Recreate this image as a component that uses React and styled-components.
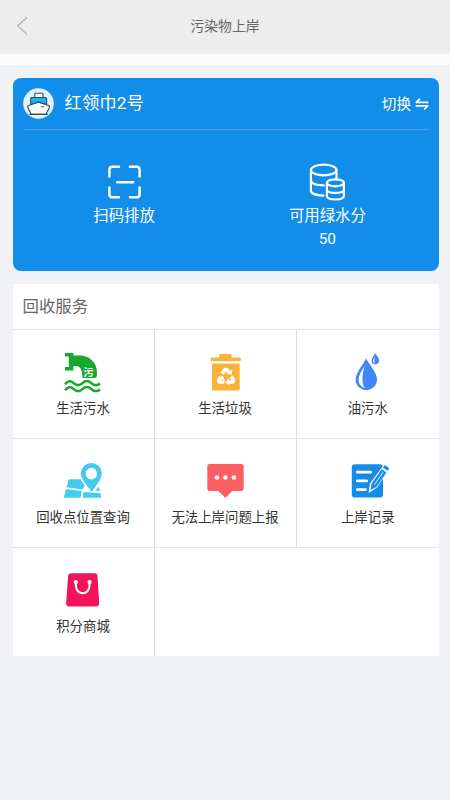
import React from "react";
import styled, { createGlobalStyle } from "styled-components";

const GlobalStyle = createGlobalStyle`
  * { box-sizing: border-box; }
  body {
    margin: 0;
    background: #f0f2f5;
    font-family: Roboto, "Noto Sans CJK SC", sans-serif;
  }
`;

const Page = styled.div`
  width: 100%;
  min-height: 800px;
  background: #f0f2f5;
`;

const Header = styled.header`
  display: grid;
  grid-template-columns: 44px 1fr 44px;
  align-items: center;
  height: 54px;
  background: #ededed;
`;

const BackButton = styled.button`
  display: flex;
  padding: 0 0 2px 16px;
  border: 0;
  background: none;
  svg { display: block; }
`;

const Title = styled.h1`
  margin: 0;
  padding-bottom: 2px;
  text-align: center;
  font-size: 13.8px;
  font-weight: 400;
  line-height: 20px;
  color: #666;
`;

const Strip = styled.div`
  height: 11px;
  background: #fcfcfc;
`;

const Main = styled.main`
  display: flex;
  flex-direction: column;
  gap: 12.5px;
  padding: 13px 11px 0 12.5px;
`;

const ShipCard = styled.section`
  height: 193px;
  padding: 0 10px;
  border-radius: 8px;
  background: #128dea;
  color: #fff;
`;

const ShipBar = styled.div`
  display: flex;
  align-items: center;
  height: 52px;
  border-bottom: 1px solid #419fec;
`;

const ShipName = styled.span`
  flex: 1;
  padding: 0 0 2px 11px;
  font-size: 17.4px;
  line-height: 24px;
`;

const SwitchButton = styled.button`
  display: flex;
  align-items: center;
  gap: 4px;
  padding: 0;
  border: 0;
  background: none;
  color: #fff;
  font: inherit;
  font-size: 14.6px;
  line-height: 22px;
`;

const Actions = styled.div`
  display: grid;
  grid-template-columns: 1fr 1fr;
  padding-top: 30px;
`;

const Action = styled.div`
  display: flex;
  flex-direction: column;
  align-items: center;
  font-size: 15.4px;
  line-height: 24px;
  svg { display: block; }
`;

const Points = styled.span`
  margin-top: -1px;
`;

const Services = styled.section`
  height: 372.5px;
  background: #fff;
`;

const ServicesTitle = styled.h2`
  height: 46px;
  margin: 0;
  padding-left: 10px;
  border-bottom: 1px solid #e4e6e8;
  font-size: 16.4px;
  font-weight: 400;
  line-height: 46px;
  color: #666;
`;

const Grid = styled.div`
  display: grid;
  grid-template-columns: 142px 142px 1fr;
  grid-auto-rows: 109px;
`;

const Cell = styled.div`
  display: flex;
  flex-direction: column;
  align-items: center;
  padding-top: 20px;
  border-right: ${(p) => (p.$right ? "1px solid #dcdee0" : "0")};
  border-bottom: ${(p) => (p.$bottom ? "1px solid #e4e6e8" : "0")};
  svg { display: block; flex: none; }
`;

const Label = styled.span`
  margin-top: 5px;
  font-size: 13.4px;
  line-height: 20px;
  color: #333;
  white-space: nowrap;
`;

const Glyph = styled.text`
  font-family: "Noto Sans CJK SC", sans-serif;
  font-size: 10px;
  font-weight: 700;
  fill: #fff;
`;

const BackIcon = () => (
  <svg width="13" height="20" viewBox="0 0 13 20" fill="none" stroke="#aaa" strokeWidth="1.1">
    <path d="M11 1.5 1.7 9.8 11 18.3" />
  </svg>
);

const ShipIcon = () => (
  <svg width="31" height="31" viewBox="0 0 31 31">
    <circle cx="15.5" cy="15.5" r="15.3" fill="#e0f2fb" />
    <g stroke="#34466a" strokeWidth="1.1" strokeLinejoin="round" strokeLinecap="round">
      <path d="M11.8 9.4V6q0-.7.7-.7h6.8q.7 0 .7.7v3.4" fill="#fff" />
      <path d="M7.6 16.8v-6.3q0-1 1-1h14q1 0 1 1v6.3L15.6 14z" fill="#16b4ed" />
      <path d="M8 26.2C7.4 23 4.9 21.8 4.7 18.6q0-.8.8-1L15.5 14.2l10.2 3.4q.8.2.8 1c-.2 3.2-2.7 4.4-3.3 7.6z" fill="#fff" />
      <path d="M18.6 18.8h2" />
      <path d="M6.8 26.4h17.6" fill="none" />
    </g>
  </svg>
);

const SwapIcon = () => (
  <svg width="14" height="12" viewBox="0 0 14 12" fill="none" stroke="#fff" strokeWidth="1.7" strokeLinecap="round" strokeLinejoin="round">
    <path d="M4.4 1.2 1.3 4.4h11.4M1.3 7.8h11.4L9.6 11" />
  </svg>
);

const ScanIcon = () => (
  <svg width="44" height="44" viewBox="102 160 44 44" fill="none" stroke="#fff" strokeWidth="2.5" strokeLinecap="round">
    <path d="M109.4 176.5v-6.8q0-2.9 2.9-2.9h6.7M130 166.8h6.7q2.9 0 2.9 2.9v6.8M109.4 187.6v6.8q0 2.9 2.9 2.9h6.7M130 197.3h6.7q2.9 0 2.9-2.9v-6.8M117.2 182.3h16" />
  </svg>
);

const CoinsIcon = () => (
  <svg width="44" height="44" viewBox="305 160 44 44" fill="none" stroke="#fff" strokeWidth="2.2" strokeLinecap="round">
    <ellipse cx="323.7" cy="170" rx="12.8" ry="5.4" />
    <path d="M310.9 170v20.4c0 3 5.2 5 12.5 5.2M310.9 180.3c0 3 5.2 5 12.8 5.1M336.5 170v8.5" />
    <ellipse cx="335.4" cy="182.8" rx="8.5" ry="3.5" />
    <path d="M326.9 182.8v13.3c0 4.5 17 4.5 17 0v-13.3M326.9 189.5c0 4.5 17 4.5 17 0" />
  </svg>
);

const SewageIcon = () => (
  <svg width="44" height="44" viewBox="61 350 44 44">
    <path fill="#16a830" d="M65 353h8.4v2.6h5.2C89 355.2 97.6 362 97 374.5q-.2 3.4-1.6 3.6H82.6c-.2-6.5-1.4-11.6-6-12.2h-3.2v4.7H65v-3.5h3.8v-10.6H65z" />
    <Glyph x="83.4" y="376.2">污</Glyph>
    <path fill="none" stroke="#16a830" strokeWidth="2.5" d="M65 384.2q4.3-5.2 8.7-1.1t8.8 0 8.8 0 8.7.4M65 390.2q4.3-5.2 8.7-1.1t8.8 0 8.8 0 8.7.4" />
  </svg>
);

const TrashIcon = () => (
  <svg width="44" height="44" viewBox="203 350 44 44">
    <path fill="#fbb23a" d="M219.3 357.5v-2.3q0-1.2 1.2-1.2h10q1.2 0 1.2 1.2v2.3h7.8q1.4 0 1.4 1.4v1q0 1.4-1.4 1.4h-27.4q-1.4 0-1.4-1.4v-1q0-1.4 1.4-1.4zM212 363.4h27.7v25.4q0 1.8-1.8 1.8h-24.1q-1.8 0-1.8-1.8z" />
    <g transform="translate(.8 0)">
      <g fill="none" stroke="#fff" strokeWidth="3.6">
        <path d="m221.5 373.8 2.1-3.4q1.6-2 3.2 0l1.2 2.1" />
        <path d="m230.5 376.3 2 3.3q1 2.2-1.4 2.4h-3.2" />
        <path d="M223.7 382h-4q-2.8-.1-1.4-2.6l1.4-2.4" />
      </g>
      <path fill="#fff" d="m225.5 373.5 5.4 1.2.7-5.2zM228.4 378.3v7.3l-3.9-3.7zM217 377.2l5.2-1.5 1.6 5.2z" />
    </g>
  </svg>
);

const OilIcon = () => (
  <svg width="44" height="44" viewBox="346 350 44 44">
    <path fill="#4386f5" d="M366.2 358.4c3 6 10.8 14.2 10.8 21.1a10.7 10.7 0 0 1-21.4 0c0-6.9 7.7-15.1 10.6-21.1z" />
    <path fill="#fff" d="M364.8 365.5c-3 5.3-6.3 9.8-6.2 14.6.1 4 2.5 6.8 6.2 8-3.7-6.2-2.5-14.8 0-22.6z" />
    <path fill="#4386f5" d="M375.3 353.3c1.2 2.5 3.8 4.6 3.8 7.3a3.8 3.8 0 0 1-7.6 0c0-2.7 2.7-4.8 3.8-7.3z" />
    <path fill="#fff" d="M375 356.6c-1.1 1.7-2.1 3-2 4.5.1 1.1.7 1.8 1.8 2.1-.8-2.1-.6-4.4.2-6.6z" />
  </svg>
);

const MapIcon = () => (
  <svg width="44" height="44" viewBox="61 459 44 44">
    <g fill="#41cbf2">
      <path d="M69.8 479.2H80.6q2.2 3.8 4.3 6.9l-2.6 3.3-15.6-2.1 1.6-6.9q.4-1.2 1.5-1.2zM65.9 489l15.6 1.9-.8 6.9H63.9zM83.4 491.9l17 1.4.9 4.5H82.9zM98.6 486.8l1.4 4.3-4.4-.5z" />
      <path fillRule="evenodd" stroke="#fff" strokeWidth="1.3" paintOrder="stroke" d="M91.4 462.9a10.4 10.4 0 0 1 10.4 10.3c0 6.7-5.9 12-10 18.7-4.2-6.7-10.9-11.9-10.9-18.7a10.4 10.4 0 0 1 10.5-10.3zm0 4.9a5.8 5.8 0 1 0 0 11.6 5.8 5.8 0 0 0 0-11.6z" />
    </g>
  </svg>
);

const MessageIcon = () => (
  <svg width="44" height="44" viewBox="203 459 44 44">
    <path fill="#fb5f61" d="M209.5 464h32q2.2 0 2.2 2.2v22.5q0 2.2-2.2 2.2h-9.3l-6.8 7-7.1-7h-8.8q-2.2 0-2.2-2.2v-22.5q0-2.2 2.2-2.2z" />
    <g fill="#fff"><circle cx="217" cy="477.5" r="2.3" /><circle cx="225.4" cy="477.5" r="2.3" /><circle cx="233.9" cy="477.5" r="2.3" /></g>
  </svg>
);

const RecordIcon = () => (
  <svg width="44" height="44" viewBox="346 459 44 44">
    <rect x="351.8" y="464.2" width="31.2" height="33.4" rx="3" fill="#168ce8" />
    <path stroke="#fff" strokeWidth="2.8" strokeLinecap="round" d="M357.3 472.2h13.4M357.3 480.9h9.4M357.3 489.6h8.2" />
    <path fill="#fff" d="m385.5 462.5 5.6 4.1-14.3 21.2-8.2 5.1 1.2-9.2z" />
    <path fill="#168ce8" d="m381.6 469.2 4.9 3.4-10.1 14.3-5.7 3.1.9-6.5z" />
    <path fill="#168ce8" d="m382.9 467.4 1.1-1.5q.7-1 1.7-.3l2.7 1.9q1 .7.3 1.7l-1 1.5z" />
    <path stroke="#fff" strokeWidth=".9" d="m383 472.4-8.6 12.2" />
  </svg>
);

const BagIcon = () => (
  <svg width="44" height="44" viewBox="61 568 44 44">
    <path fill="#f11458" d="M71.4 573.3h23.2q2.7 0 2.9 2.7l1.7 27.1q.1 3.4-3.2 3.4H69.3q-3.3 0-3.1-3.4L68.1 576q.3-2.7 3.3-2.7z" />
    <path fill="none" stroke="#fff" strokeWidth="2" d="M75.8 582.4v2.7c0 11 13.8 11 13.8 0v-2.7" />
    <circle cx="75.8" cy="582" r="2.1" fill="#fff" /><circle cx="89.6" cy="582" r="2.1" fill="#fff" />
  </svg>
);

const services = [
  { label: "生活污水", Icon: SewageIcon },
  { label: "生活垃圾", Icon: TrashIcon },
  { label: "油污水", Icon: OilIcon },
  { label: "回收点位置查询", Icon: MapIcon },
  { label: "无法上岸问题上报", Icon: MessageIcon },
  { label: "上岸记录", Icon: RecordIcon },
  { label: "积分商城", Icon: BagIcon },
];

export default function App() {
  return (
    <Page>
      <GlobalStyle />
      <Header>
        <BackButton aria-label="返回"><BackIcon /></BackButton>
        <Title>污染物上岸</Title>
      </Header>
      <Strip />
      <Main>
        <ShipCard>
          <ShipBar>
            <ShipIcon />
            <ShipName>红领巾2号</ShipName>
            <SwitchButton>切换<SwapIcon /></SwitchButton>
          </ShipBar>
          <Actions>
            <Action><ScanIcon /><span>扫码排放</span></Action>
            <Action><CoinsIcon /><span>可用绿水分</span><Points>50</Points></Action>
          </Actions>
        </ShipCard>
        <Services>
          <ServicesTitle>回收服务</ServicesTitle>
          <Grid>
            {services.map(({ label, Icon }, i) => (
              <Cell key={label} $right={i % 3 < 2} $bottom={i < 6}>
                <Icon />
                <Label>{label}</Label>
              </Cell>
            ))}
          </Grid>
        </Services>
      </Main>
    </Page>
  );
}
